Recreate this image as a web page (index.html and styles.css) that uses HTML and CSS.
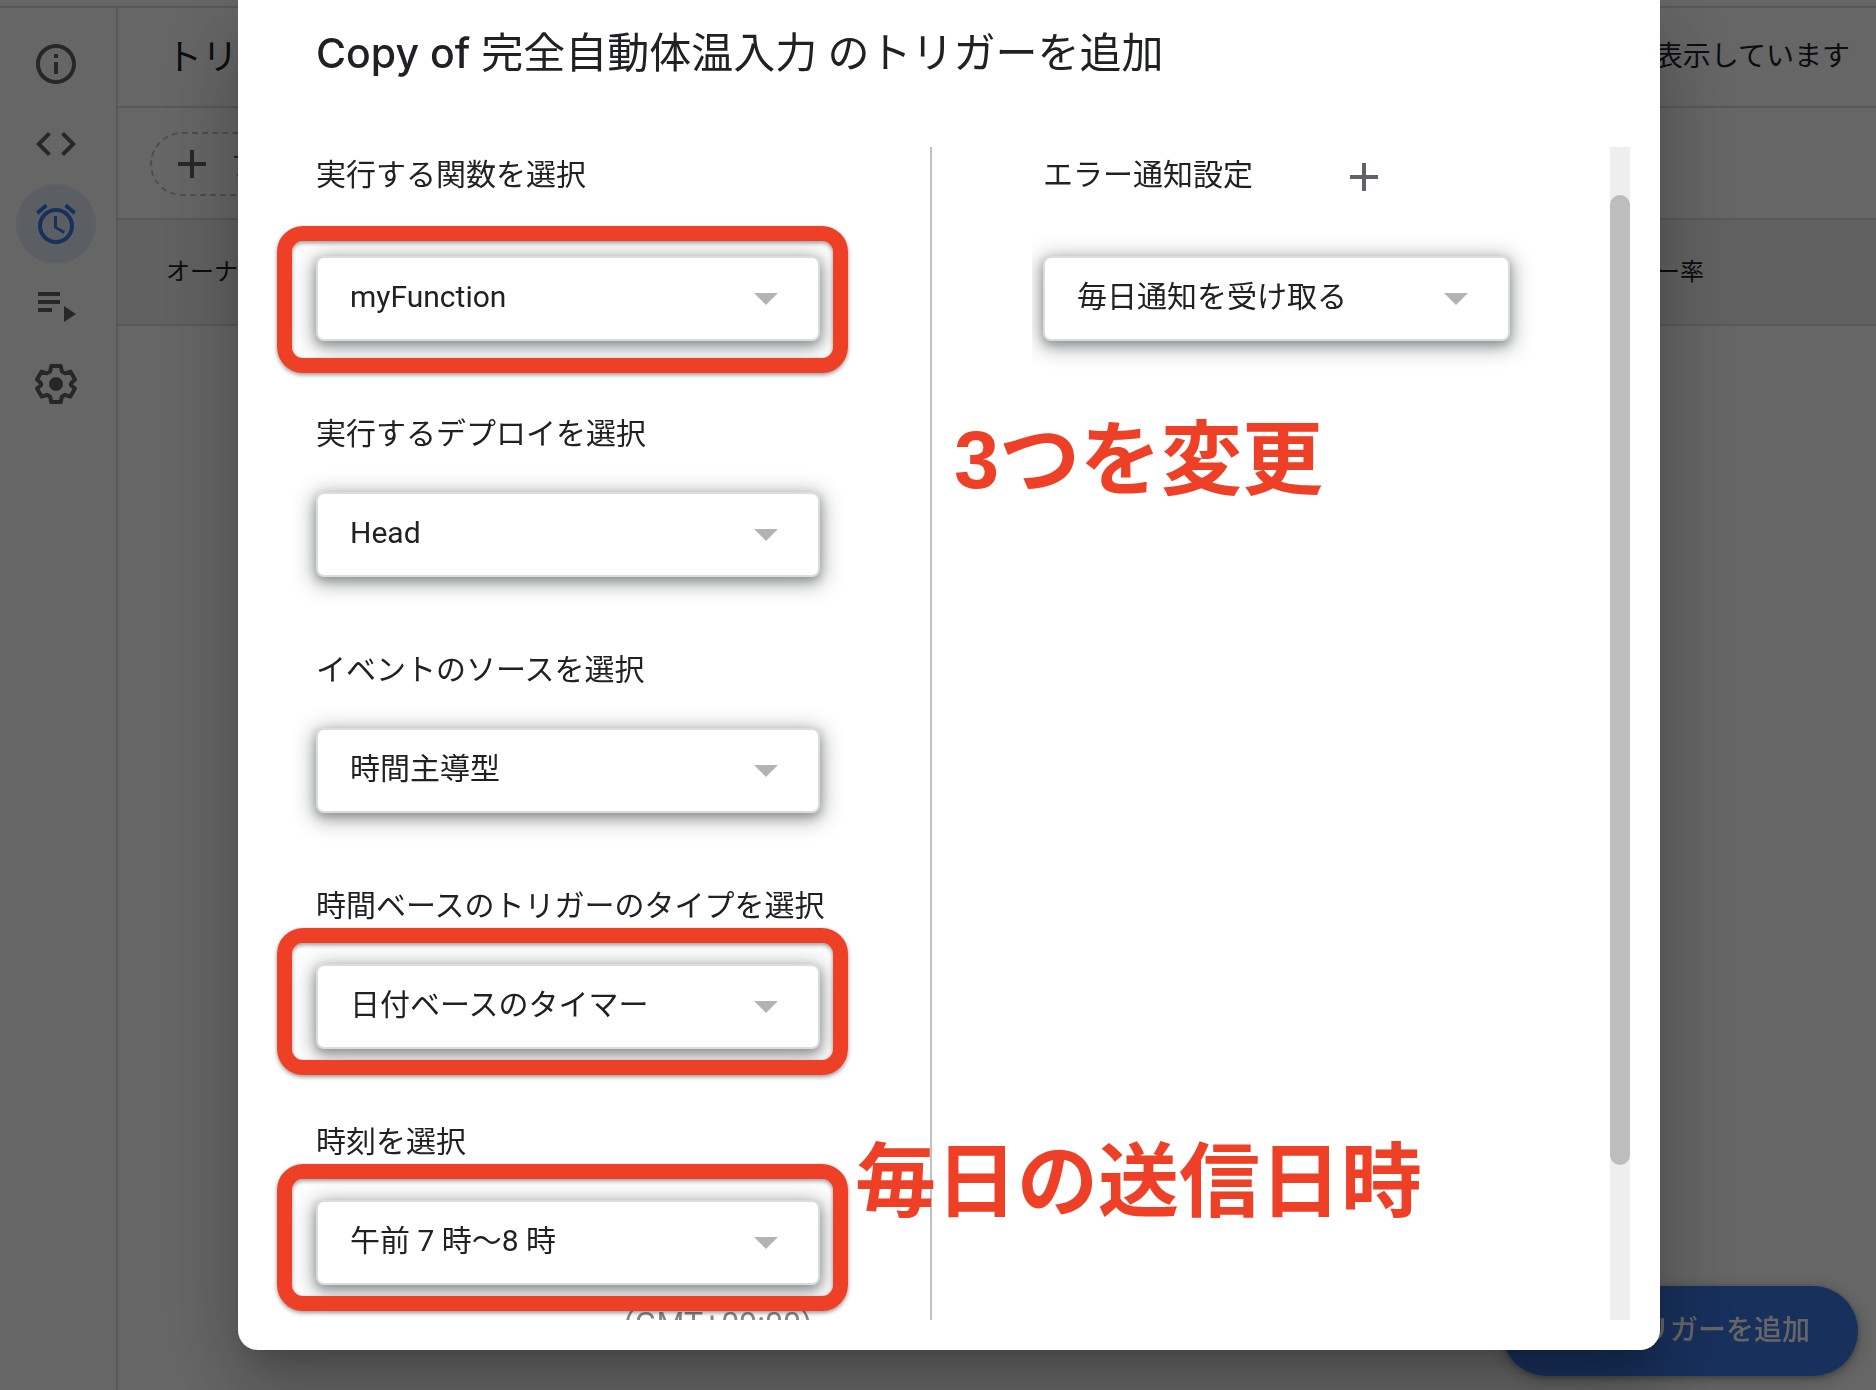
FILE: index.html
```html
<!DOCTYPE html>
<html lang="ja">
<head>
<meta charset="utf-8">
<meta name="viewport" content="width=device-width, initial-scale=1">
<title>トリガー</title>
<link rel="stylesheet" href="styles.css">
</head>
<body>
<div class="app">
  <nav class="rail" aria-label="プロジェクト">
    <a class="rail-item" href="#overview" aria-label="概要"><svg class="icon" viewBox="0 0 24 24"><path d="M11 7h2v2h-2zm0 4h2v6h-2zm1-9C6.480 2 2 6.480 2 12s4.480 10 10 10 10-4.480 10-10S17.520 2 12 2zm0 18c-4.410 0-8-3.590-8-8s3.590-8 8-8 8 3.590 8 8-3.590 8-8 8z"/></svg></a>
    <a class="rail-item" href="#editor" aria-label="エディタ"><svg class="icon" viewBox="0 0 24 24"><path d="M9.400 16.600L4.800 12l4.600-4.600L8 6l-6 6 6 6 1.400-1.400zm5.200 0l4.600-4.600-4.600-4.600L16 6l6 6-6 6-1.400-1.400z"/></svg></a>
    <a class="rail-item rail-item-active" href="#triggers" aria-label="トリガー"><svg class="icon" viewBox="0 0 24 24"><path d="M22 5.720l-4.600-3.860-1.290 1.530 4.600 3.860L22 5.720zM7.880 3.390L6.600 1.860 2 5.710l1.290 1.530 4.590-3.850zM12.500 8H11v6l4.750 2.850.750-1.230-4-2.370V8zM12 4c-4.970 0-9 4.030-9 9s4.020 9 9 9c4.970 0 9-4.030 9-9s-4.030-9-9-9zm0 16c-3.870 0-7-3.130-7-7s3.130-7 7-7 7 3.130 7 7-3.130 7-7 7z"/></svg></a>
    <a class="rail-item" href="#executions" aria-label="実行数"><svg class="icon" viewBox="0 0 24 24"><path d="M3 6h11v2H3zM3 10h11v2H3zM3 14h7v2H3zM16 13v8l6-4z"/></svg></a>
    <a class="rail-item" href="#settings" aria-label="設定"><svg class="icon" viewBox="0 0 24 24"><path fill="none" stroke="currentColor" stroke-width="2" stroke-linejoin="round" d="M9.600 3h4.800l.5 2.700 1.700 1 2.600-.9 2.300 4-2 1.800v1l2 1.700-2.300 4-2.600-.9-1.700 1-.5 2.600H9.600l-.5-2.600-1.700-1-2.600.9-2.300-4 2-1.700v-1l-2-1.800 2.300-4 2.600.9 1.700-1z"/><circle cx="12" cy="12" r="3.500"/></svg></a>
  </nav>
  <main class="content">
    <header class="content-head">
      <h1 class="content-title">トリガー</h1>
      <span class="content-count">0 件のトリガーを表示しています</span>
    </header>
    <div class="filter-row">
      <button class="filter-chip" type="button"><svg class="icon" viewBox="0 0 24 24"><path d="M19 13h-6v6h-2v-6H5v-2h6V5h2v6h6z"/></svg>フィルタを追加</button>
    </div>
    <table class="trigger-table">
      <thead><tr><th>オーナー</th><th class="cell-rate">エラー率</th></tr></thead>
    </table>
  </main>
  <button class="fab" type="button">トリガーを追加</button>
</div>

<div class="scrim">
  <section class="dialog" role="dialog" aria-labelledby="dialog-title">
    <h2 class="dialog-title" id="dialog-title"><span class="dialog-title-latin">Copy of </span>完全自動体温入力 のトリガーを追加</h2>
    <div class="dialog-body">
      <div class="pane pane-main">
        <div class="field field-first">
          <label for="fn">実行する関数を選択</label>
          <div class="select"><select id="fn"><option>myFunction</option></select><span class="highlight highlight-first"></span></div>
        </div>
        <div class="field">
          <label for="deploy">実行するデプロイを選択</label>
          <div class="select"><select id="deploy"><option>Head</option></select></div>
        </div>
        <div class="field">
          <label for="source">イベントのソースを選択</label>
          <div class="select"><select id="source"><option>時間主導型</option></select></div>
        </div>
        <div class="field">
          <label for="type">時間ベースのトリガーのタイプを選択</label>
          <div class="select"><select id="type"><option>日付ベースのタイマー</option></select><span class="highlight"></span></div>
        </div>
        <div class="field">
          <label for="time">時刻を選択</label>
          <div class="select"><select id="time"><option>午前 7 時～8 時</option></select><span class="highlight"></span></div>
          <p class="timezone">(GMT+09:00)</p>
        </div>
      </div>
      <div class="pane pane-side">
        <div class="field field-first">
          <div class="label-row">
            <label for="notify">エラー通知設定</label>
            <button class="add" type="button" aria-label="追加"><svg class="icon" viewBox="0 0 24 24"><path d="M19 13h-6v6h-2v-6H5v-2h6V5h2v6h6z"/></svg></button>
          </div>
          <div class="select"><select id="notify"><option>毎日通知を受け取る</option></select></div>
        </div>
      </div>
      <div class="scrollbar"><div class="scrollbar-thumb"></div></div>
    </div>
    <p class="note note-count">3つを変更</p>
    <p class="note note-time">毎日の送信日時</p>
  </section>
</div>
</body>
</html>
```
FILE: styles.css
```css
* { box-sizing: border-box; }

body {
  margin: 0;
  height: 100vh;
  overflow: hidden;
  background: #fff;
  color: #202124;
  font-family: Roboto, "Noto Sans CJK JP", sans-serif;
  font-weight: 400;
}

h1, h2, p { margin: 0; font-weight: 400; }

button, select { font: inherit; color: inherit; }

.icon { display: block; width: 48px; height: 48px; fill: currentColor; flex: none; }

/* Page behind the dialog */
.app {
  display: flex;
  height: 100%;
  padding-top: 6px;
}

.rail {
  flex: none;
  width: 118px;
  padding: 16px 0 0 16px;
  border-top: 2px solid #dadce0;
  border-right: 2px solid #dadce0;
  color: #5f6368;
}

.rail-item {
  display: flex;
  align-items: center;
  justify-content: center;
  width: 80px;
  height: 80px;
  border-radius: 50%;
  color: inherit;
}

.rail-item-active { background: #e4eefa; color: #3b78e7; }

.content { flex: 1; min-width: 0; border-top: 2px solid #dadce0; }

.content-head {
  display: flex;
  align-items: center;
  justify-content: space-between;
  height: 100px;
  padding: 0 26px 6px 48px;
  border-bottom: 2px solid #dadce0;
}

.content-title { font-size: 36px; }
.content-count { font-size: 28px; }

.filter-row {
  display: flex;
  align-items: center;
  height: 112px;
  padding: 2px 32px 0;
  border-bottom: 2px solid #dadce0;
}

.filter-chip {
  display: flex;
  align-items: center;
  gap: 14px;
  height: 64px;
  padding: 0 32px 0 16px;
  border: 2px dashed #bdc1c6;
  border-radius: 32px;
  background: none;
  color: #5f6368;
  font-size: 28px;
}

.trigger-table {
  width: 100%;
  border-collapse: collapse;
  background: #f3f3f3;
  font-size: 24px;
}

.trigger-table th {
  height: 105px;
  padding: 0 0 6px 48px;
  border-bottom: 2px solid #dadce0;
  font-weight: 400;
  text-align: left;
}

.trigger-table .cell-rate { padding: 0 172px 6px 0; text-align: right; }

.fab {
  position: fixed;
  right: 18px;
  bottom: 14px;
  height: 90px;
  padding: 0 48px 6px 112px;
  border: 0;
  border-radius: 45px;
  background: #3b78e7;
  color: #fff;
  font-size: 28px;
  font-weight: 500;
  box-shadow: 0 2px 6px rgba(0, 0, 0, .3), 0 4px 16px 4px rgba(0, 0, 0, .15);
}

/* Dialog */
.scrim {
  position: fixed;
  inset: 0;
  display: flex;
  padding: 0 216px 40px 238px;
  background: rgba(0, 0, 0, .6);
}

.dialog {
  position: relative;
  flex: 1;
  min-width: 0;
  display: flex;
  flex-direction: column;
  padding-bottom: 30px;
  border-radius: 0 0 20px 20px;
  background: #fff;
  box-shadow: 0 22px 30px -14px rgba(0, 0, 0, .2), 0 48px 76px 6px rgba(0, 0, 0, .14), 0 18px 92px 16px rgba(0, 0, 0, .12);
}

.dialog-title {
  padding: 22px 78px 62px;
  font-size: 42px;
  line-height: 62px;
}

.dialog-title-latin {
  font-family: Inter, sans-serif;
  font-size: 41px;
  font-weight: 500;
}

.dialog-body {
  flex: 1;
  min-height: 0;
  display: flex;
  padding-right: 30px;
}

.pane { overflow: hidden; }

.pane-main {
  flex: none;
  padding: 8px 110px 0 78px;
  border-right: 2px solid #bdc1c6;
}

.pane-side {
  flex: 1;
  margin-left: 100px;
  padding: 8px 100px 0 11px;
}

.field { margin-bottom: 73px; }
.pane-main .field { width: 504px; }

.field label {
  display: block;
  margin-bottom: 38px;
  font-size: 30px;
  line-height: 40px;
  white-space: nowrap;
}

.field-first label { margin-bottom: 61px; }

.label-row { display: flex; gap: 87px; }

.add {
  display: flex;
  align-items: center;
  height: 44px;
  padding: 0;
  border: 0;
  background: none;
  color: #5f6368;
}

.select { position: relative; }

.select select {
  display: block;
  width: 100%;
  height: 85px;
  padding: 0 80px 4px 32px;
  appearance: none;
  border: 2px solid #dadce0;
  border-radius: 8px;
  background: #fff;
  font-size: 30px;
  box-shadow: 0 4px 8px rgba(60, 64, 67, .3), 0 4px 20px 3px rgba(60, 64, 67, .45);
}

.select::after {
  content: "";
  position: absolute;
  top: 37px;
  right: 42px;
  border: 12px solid transparent;
  border-top-color: #b3b3b3;
  border-bottom-width: 0;
}

.timezone {
  margin-top: 18px;
  padding-right: 8px;
  color: #80868b;
  font-size: 32px;
  line-height: 40px;
  text-align: right;
}

.scrollbar { flex: none; width: 20px; padding-top: 48px; background: #eee; }
.scrollbar-thumb { height: 970px; border-radius: 10px; background: #bdbdbd; }

/* Annotations */
.highlight {
  position: absolute;
  inset: -36px -28px -26px -39px;
  border: 15px solid #ed4027;
  border-radius: 26px;
  box-shadow: 0 2px 4px rgba(0, 0, 0, .4), inset 0 2px 4px rgba(0, 0, 0, .4);
  pointer-events: none;
}

.highlight-first { inset: -30px -28px -32px -39px; }

.note {
  position: absolute;
  color: #ed4027;
  font-family: "Liberation Sans", "Noto Sans CJK JP", sans-serif;
  font-size: 81px;
  font-weight: 700;
  line-height: 100px;
  white-space: nowrap;
}

.note-count { top: 410px; left: 716px; }
.note-time { top: 1132px; left: 617px; }
```
